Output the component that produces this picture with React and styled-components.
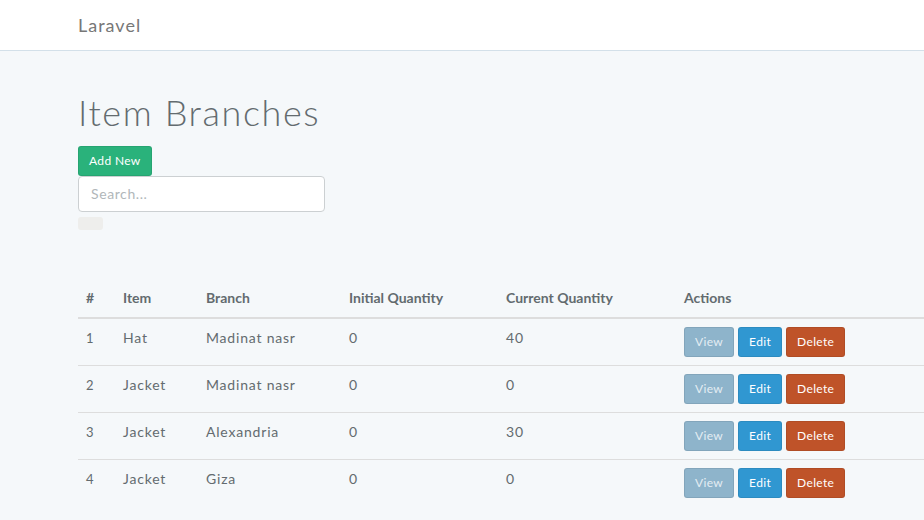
import React from "react"
import styled, { createGlobalStyle } from "styled-components"

const rows = [
  { id: 1, item: "Hat", branch: "Madinat nasr", initial: 0, current: 40 },
  { id: 2, item: "Jacket", branch: "Madinat nasr", initial: 0, current: 0 },
  { id: 3, item: "Jacket", branch: "Alexandria", initial: 0, current: 30 },
  { id: 4, item: "Jacket", branch: "Giza", initial: 0, current: 0 },
]

const btnColors = {
  view: "#8eb4cb",
  edit: "#3097d1",
  delete: "#bf5329",
  add: "#2ab27b",
}

const App = () => {
  return (
    <>
      <GlobalStyle />
      <Navbar>
        <Brand>Laravel</Brand>
      </Navbar>
      <Container>
        <Title>Item Branches</Title>
        <Button kind="add">Add New</Button>
        <SearchInput placeholder="Search..." />
        <Pager />
        <Table>
          <colgroup>
            <col style={{ width: 37 }} />
            <col style={{ width: 83 }} />
            <col style={{ width: 143 }} />
            <col style={{ width: 157 }} />
            <col style={{ width: 178 }} />
            <col />
          </colgroup>
          <thead>
            <tr>
              <Th>#</Th>
              <Th>Item</Th>
              <Th>Branch</Th>
              <Th>Initial Quantity</Th>
              <Th>Current Quantity</Th>
              <Th>Actions</Th>
            </tr>
          </thead>
          <tbody>
            {rows.map((r) => (
              <tr key={r.id}>
                <Td small>{r.id}</Td>
                <Td>{r.item}</Td>
                <Td>{r.branch}</Td>
                <Td>{r.initial}</Td>
                <Td>{r.current}</Td>
                <Td>
                  <Actions>
                    <Button kind="view">View</Button>
                    <Button kind="edit">Edit</Button>
                    <Button kind="delete">Delete</Button>
                  </Actions>
                </Td>
              </tr>
            ))}
          </tbody>
        </Table>
      </Container>
    </>
  )
}

export default App

const GlobalStyle = createGlobalStyle`
body {
  margin: 0;
  background-color: #f5f8fa;
  font-family: Lato, "Open Sans", sans-serif;
  font-size: 14px;
  line-height: 1.6;
  color: #636b6f;
  overflow: hidden;
}
* { box-sizing: border-box; }
`

const Navbar = styled.div`
height: 51px;
background-color: #fff;
border-bottom: 1px solid #d3e0e9;
display: flex;
align-items: center;
padding-left: 78px;
`

const Brand = styled.div`
font-size: 18px;
color: #777;
letter-spacing: 1px;
`

const Container = styled.div`
padding-left: 78px;
display: flex;
flex-direction: column;
align-items: flex-start;
`

const Title = styled.h1`
font-size: 36px;
font-weight: 300;
line-height: 1.1;
margin: 42px 0 13px;
letter-spacing: 1.6px;
`

const Button = styled.button`
display: inline-block;
font-family: inherit;
font-size: 12px;
line-height: 1.5;
padding: 5px 10px;
border-radius: 3px;
border: 1px solid rgba(0, 0, 0, 0.08);
color: ${(p) => (p.kind === "view" ? "#e4edf3" : "#fff")};
background-color: ${(p) => btnColors[p.kind]};
height: 30px;
letter-spacing: 0.35px;
cursor: pointer;
`

const SearchInput = styled.input`
width: 247px;
height: 36px;
margin-top: 0;
border: 1px solid #ccd0d2;
border-radius: 4px;
padding: 6px 12px;
font-family: inherit;
font-size: 14px;
letter-spacing: 0.6px;
color: #555;
background: #fff;
&::placeholder {
  color: #b1b7ba;
}
`

const Pager = styled.div`
width: 25px;
height: 13px;
margin-top: 5px;
border-radius: 3px;
background-color: #eeeeec;
`

const Table = styled.table`
margin-top: 49px;
width: 920px;
table-layout: fixed;
border-collapse: collapse;
`

const Th = styled.th`
text-align: left;
font-weight: 700;
padding: 8px;
line-height: 22px;
border-bottom: 2px solid #ddd;
`

const Td = styled.td`
padding: 8px;
line-height: 22px;
vertical-align: top;
border-top: 1px solid #ddd;
letter-spacing: 0.8px;
font-size: ${(p) => (p.small ? "13px" : "14px")};
`

const Actions = styled.div`
display: flex;
gap: 4px;
letter-spacing: 0.35px;
`
